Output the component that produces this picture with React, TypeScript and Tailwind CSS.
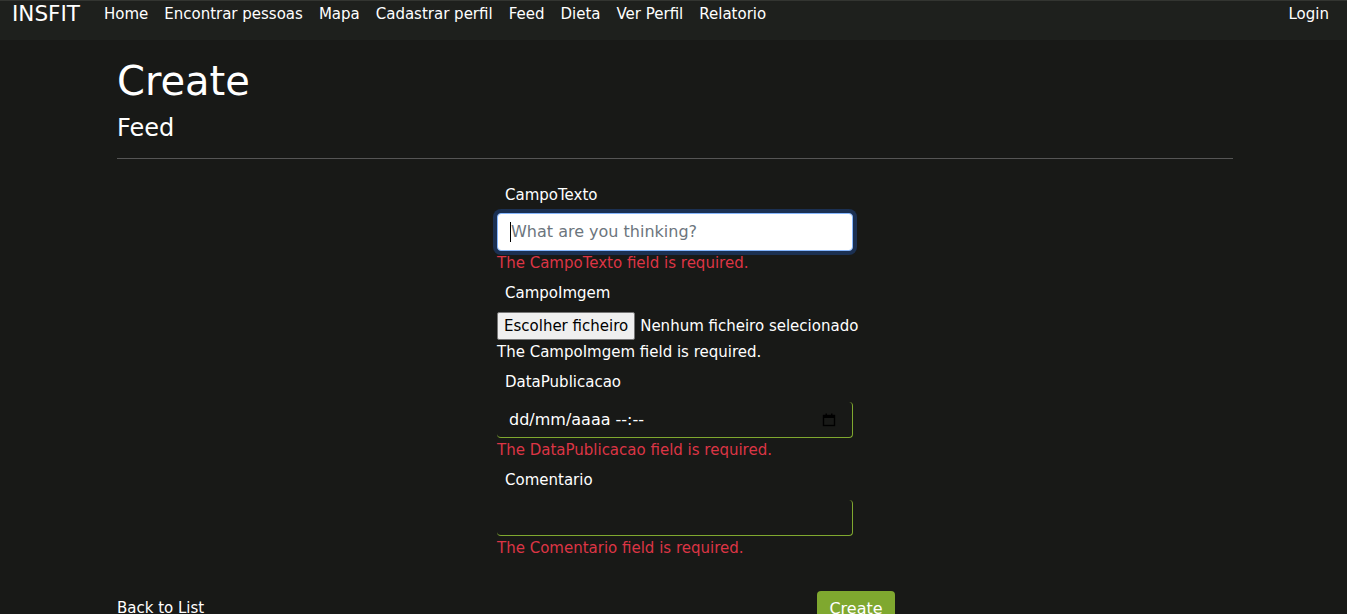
const font = { fontFamily: '"DejaVu Sans", Verdana, sans-serif' };

const navLinks = ['Home', 'Encontrar pessoas', 'Mapa', 'Cadastrar perfil', 'Feed', 'Dieta', 'Ver Perfil', 'Relatorio'];

function CalendarIcon() {
  return (
    <svg width="14" height="14" viewBox="0 0 14 14" className="shrink-0">
      <rect x="1.5" y="2.5" width="11" height="10" fill="none" stroke="#000" strokeWidth="1.4" />
      <rect x="1.5" y="2.5" width="11" height="2.5" fill="#000" />
      <rect x="3.5" y="0.5" width="1.5" height="2.5" fill="#000" />
      <rect x="9" y="0.5" width="1.5" height="2.5" fill="#000" />
    </svg>
  );
}

function Label({ children }: { children: string }) {
  return <div className="px-2 text-[15px] leading-6 text-white">{children}</div>;
}

function Error({ children, white }: { children: string; white?: boolean }) {
  return (
    <div className={`text-[15px] leading-6 whitespace-nowrap ${white ? 'text-white' : 'text-[#dc3545]'}`}>{children}</div>
  );
}

export default function App() {
  return (
    <div className="h-[614px] overflow-hidden bg-[#181917] text-white" style={font}>
      <nav className="h-10 border-t border-[#333531] bg-[#1e201d] flex items-start px-3">
        <span className="text-[21.5px] leading-[26px] mr-6">INSFIT</span>
        <ul className="flex gap-4 text-[15px] leading-[24px] pt-[1px]">
          {navLinks.map((l) => (
            <li key={l}>{l}</li>
          ))}
        </ul>
        <span className="ml-auto text-[15px] leading-[24px] pt-[1px] pr-[6px]">Login</span>
      </nav>

      <main className="w-[1116px] ml-[117px] pt-[14px]">
        <h1 className="text-[40px] leading-[54px]">Create</h1>
        <h4 className="text-[24px] leading-[32px] mt-[4px]">Feed</h4>
        <hr className="mt-[14px] border-[#555]" />

        <div className="w-[356px] ml-[380px] mt-[24px]">
          <Label>CampoTexto</Label>
          <div className="mt-[6px] h-[38px] rounded bg-white border border-[#86b7fe] ring-4 ring-[#1b3052] flex items-center px-3">
            <span className="w-px h-[20px] bg-black" />
            <span className="text-[16px] text-[#6c757d]">What are you thinking?</span>
          </div>
          <Error>The CampoTexto field is required.</Error>

          <div className="mt-[6px]">
            <Label>CampoImgem</Label>
          </div>
          <div className="mt-[7px] flex items-center text-[15px] whitespace-nowrap">
            <button className="h-[28px] px-[6px] bg-[#efefef] border border-[#767676] rounded-[2px] text-black text-[15px] leading-none whitespace-nowrap">
              Escolher ficheiro
            </button>
            <span className="ml-[5px]">Nenhum ficheiro selecionado</span>
          </div>
          <Error white>The CampoImgem field is required.</Error>

          <div className="mt-[6px]">
            <Label>DataPublicacao</Label>
          </div>
          <div className="mt-[8px] h-[36px] rounded border-r border-b border-[#7fa82f] flex items-center pl-3 pr-[16px]">
            <span className="text-[16px] text-white">dd/mm/aaaa --:--</span>
            <span className="ml-auto">
              <CalendarIcon />
            </span>
          </div>
          <Error>The DataPublicacao field is required.</Error>

          <div className="mt-[6px]">
            <Label>Comentario</Label>
          </div>
          <div className="mt-[8px] h-[36px] rounded border-r border-b border-[#7fa82f]" />
          <Error>The Comentario field is required.</Error>
        </div>

        <div className="relative h-[60px]">
          <button className="absolute left-[700px] top-[31px] h-[38px] w-[78px] rounded bg-[#7fa82f] text-white text-[16px] leading-6 flex items-start justify-center pt-[6px]">
            Create
          </button>
          <span className="absolute left-0 top-[36px] text-[15px] leading-6">Back to List</span>
        </div>
      </main>
    </div>
  );
}
